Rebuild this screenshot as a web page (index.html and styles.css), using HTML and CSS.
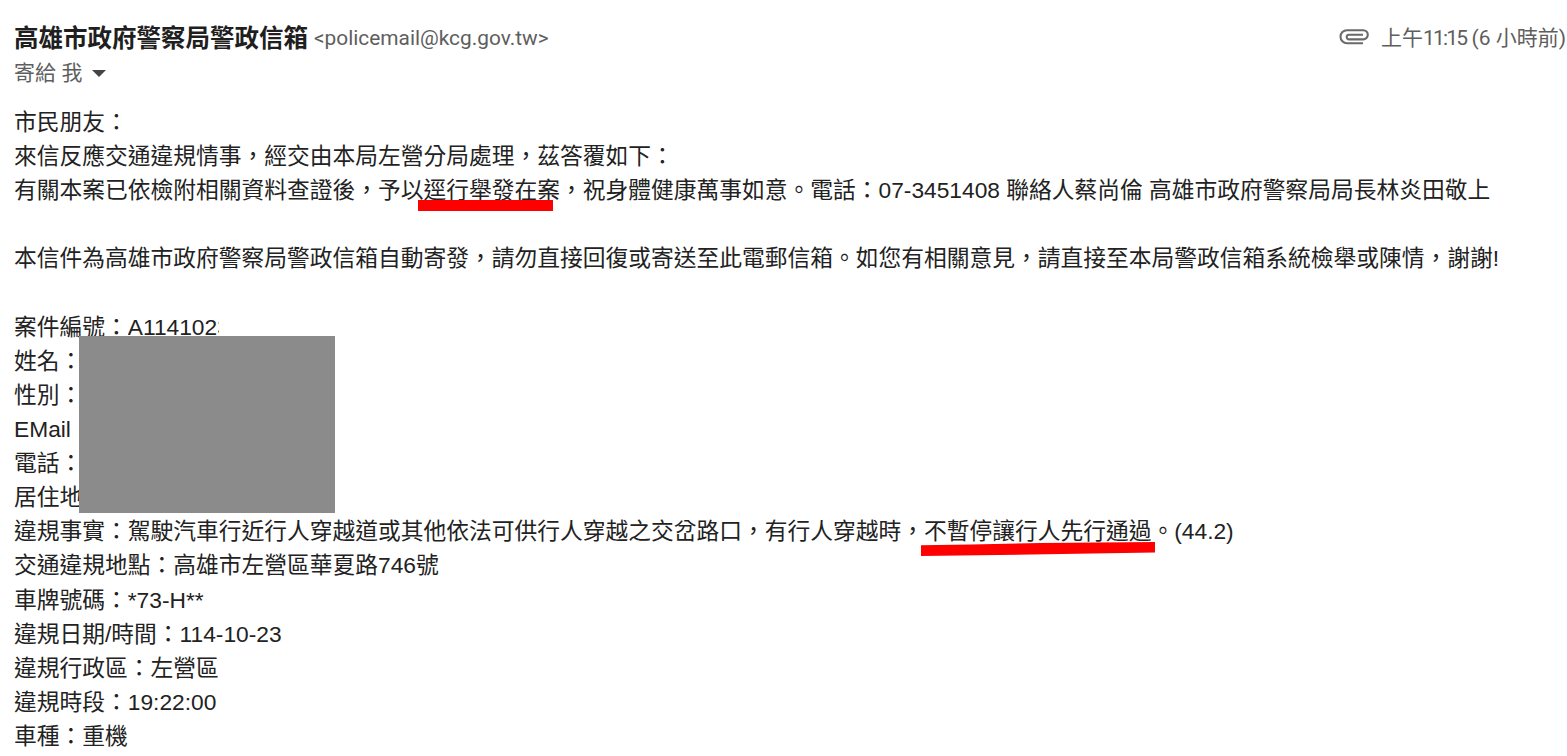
FILE: index.html
```html
<!DOCTYPE html>
<html lang="zh-Hant">
<head>
  <meta charset="UTF-8" />
  <meta name="viewport" content="width=device-width, initial-scale=1.0"/>
  <title>高雄市政府警察局警政信箱</title>
  <link rel="stylesheet" href="styles.css">
</head>
<body>

  <header class="mail-header">
    <div class="sender">
      <span class="sender-name">高雄市政府警察局警政信箱</span>
      <span class="sender-email">&lt;policemail@kcg.gov.tw&gt;</span>
    </div>
    <div class="meta">
      <svg class="clip" viewBox="0 0 30 18" width="30" height="18">
        <path d="M24 15.2H8A6.5 6.5 0 0 1 8 2.2H24.2A4.6 4.6 0 0 1 24.2 11.4H10A2.3 2.3 0 0 1 10 6.8H24"/>
      </svg>
      <span class="time">上午<span class="clock">11:15</span> (6 小時前)</span>
    </div>
  </header>

  <div class="recipient">
    <span class="to">寄給 我</span>
    <span class="arrow"></span>
  </div>

  <main class="mail-body">
    <p>市民朋友：</p>
    <p>來信反應交通違規情事，經交由本局左營分局處理，茲答覆如下：</p>
    <p>有關本案已依檢附相關資料查證後，予以<span class="marked">逕行舉發在案<i class="mark mark-flat"></i></span>，祝身體健康萬事如意。電話：07-3451408 聯絡人蔡尚倫 高雄市政府警察局局長林炎田敬上</p>
    <p><br></p>
    <p>本信件為高雄市政府警察局警政信箱自動寄發，請勿直接回復或寄送至此電郵信箱。如您有相關意見，請直接至本局警政信箱系統檢舉或陳情，謝謝!</p>
    <p><br></p>
    <div class="private">
      <p>案件編號：<span class="case-no">A1141023</span></p>
      <p>姓名：</p>
      <p>性別：</p>
      <p>EMail</p>
      <p>電話：</p>
      <p>居住地</p>
      <div class="cover"></div>
    </div>
    <p>違規事實：駕駛汽車行近行人穿越道或其他依法可供行人穿越之交岔路口，有行人穿越時，<span class="marked">不暫停讓行人先行通過<svg class="mark mark-slope" viewBox="0 0 234 14" width="234" height="14"><path d="M0 3.3L50 2.6L120 1L234 0V10.5L110 12.5L0 14Z"/></svg></span>。(44.2)</p>
    <p>交通違規地點：高雄市左營區華夏路746號</p>
    <p>車牌號碼：*73-H**</p>
    <p>違規日期/時間：114-10-23</p>
    <p>違規行政區：左營區</p>
    <p>違規時段：19:22:00</p>
    <p>車種：重機</p>
  </main>

</body>
</html>
```
FILE: styles.css
```css
body {
  margin: 0;
  padding: 19px 1px 0 14px;
  height: 737px;
  overflow: hidden;
  background-color: #fff;
  color: #222;
  font-family: "Liberation Sans", "Noto Sans CJK TC", sans-serif;
}

.mail-header {
  display: flex;
  justify-content: space-between;
  height: 36px;
  line-height: 36px;
  white-space: nowrap;
}

.sender {
  display: flex;
  gap: 6px;
}

.sender-name {
  font-family: "Noto Sans CJK TC", sans-serif;
  font-size: 24.5px;
  font-weight: bold;
  color: #1f1f1f;
}

.sender-email {
  padding-top: 1px;
  font-family: Roboto, sans-serif;
  font-size: 20.85px;
  color: #5e5e5e;
}

.meta {
  display: flex;
  align-items: center;
  gap: 12px;
  color: #5e5e5e;
}

.clip path {
  fill: none;
  stroke: #6a6a6a;
  stroke-width: 2.1;
}

.time {
  padding-top: 1px;
  font-family: Roboto, "Noto Sans CJK TC", sans-serif;
  font-size: 21px;
}

.clock {
  letter-spacing: -1.8px;
}

.recipient {
  display: flex;
  align-items: center;
  gap: 10px;
  height: 32px;
  color: #5e5e5e;
  font-size: 20.9px;
}

.arrow {
  margin-top: 4px;
  border: 7px solid transparent;
  border-top-color: #444;
  border-bottom: 0;
}

.mail-body {
  padding-top: 18px;
  font-size: 22.75px;
  line-height: 34.12px;
  white-space: nowrap;
}

p {
  margin: 0;
  height: 34.12px;
}

/* red strokes drawn over the text */
.marked {
  position: relative;
}

.mark {
  position: absolute;
}

.mark-flat {
  left: -6px;
  top: 23px;
  width: 135px;
  height: 11px;
  background-color: #f00;
}

.mark-slope {
  left: -3px;
  top: 24px;
  fill: #f00;
}

.private {
  position: relative;
}

.case-no {
  display: inline-block;
  width: 91px;
  overflow: hidden;
  vertical-align: top;
}

/* block hiding the personal data */
.cover {
  position: absolute;
  left: 65px;
  top: 26px;
  width: 256px;
  height: 177px;
  background-color: #8b8b8b;
}
```
